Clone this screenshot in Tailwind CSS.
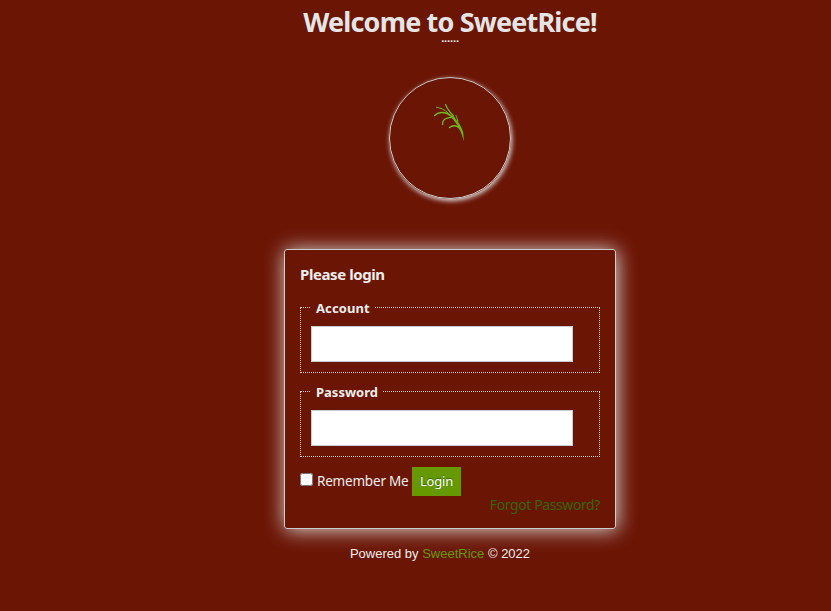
<!DOCTYPE html>
<html lang="en">
<head>
<meta charset="utf-8">
<title>SweetRice Login</title>
<script src="https://cdn.jsdelivr.net/npm/@tailwindcss/browser@4"></script>
</head>
<body class="bg-[#6b1505] overflow-hidden font-['Noto_Sans',sans-serif] text-[#eee]">
<div class="w-full pl-[69px] h-[611px] flex flex-col items-center whitespace-nowrap">
  <h1 class="h-[36px] pt-[5px] text-[27px] leading-[34px] font-bold text-[#e5e5e5] tracking-[-0.84px]">Welcome to SweetRice!</h1>
  <div class="h-[10px] mt-[-3px] text-[11px] leading-[10px] font-bold tracking-[-0.14px]">......</div>
  <div class="mt-[34px] w-[122px] h-[122px] shrink-0 rounded-full border border-[#ccc] shadow-[1px_2px_5px_#ddd] flex justify-center">
    <svg class="mt-[26px] w-[32px] h-[40px]" viewBox="0 0 32 40" fill="none" stroke="#70bd1c" stroke-linecap="round">
      <path d="M.7 11.5C4 8 10 7.5 15 10.5" stroke-width="1.5"/>
      <path d="M2.5 3.3C7 4.2 10 5 14.5 9.5" stroke-width="1"/>
      <path d="M11.6 .3C12.5 4 15 7 19.5 12" stroke-width="1.2"/>
      <path d="M8.7 20.5C8 16 12 12.5 20 13.5" stroke-width="1.3"/>
      <path d="M22 11.5C22.3 13 23 14 24 17" stroke-width="1"/>
      <path d="M15.5 23.5C19 20.5 25 21 28 28" stroke-width="1.3"/>
      <path d="M11 8.5C18 9 27 19 29.3 29L30 37.5C28 31 26.5 26 22.5 20C19 14.5 15 11 11 8.5Z" fill="#66b814" stroke="none"/>
    </svg>
  </div>
  <form class="mt-[50px] w-[332px] h-[280px] shrink-0 rounded-[3px] border border-[#ccc] shadow-[1px_1px_20px_#ddd] px-[15px] pt-[13px]">
    <h2 class="h-[22px] leading-[22px] text-[15px] font-bold tracking-[-0.42px]">Please login</h2>
    <fieldset class="mt-[12px] h-[76px] border border-dotted border-[#ccc] px-[10px]">
      <legend class="h-[20px] px-[5px] text-[13px] leading-[22px] font-bold tracking-[0.1px]">Account</legend>
      <input type="text" aria-label="Account" class="block mt-[9px] w-[262px] h-[36px] bg-white border border-[#ccc]">
    </fieldset>
    <fieldset class="mt-[8px] h-[76px] border border-dotted border-[#ccc] px-[10px]">
      <legend class="h-[20px] px-[5px] text-[13px] leading-[22px] font-bold">Password</legend>
      <input type="password" aria-label="Password" class="block mt-[9px] w-[262px] h-[36px] bg-white border border-[#ccc]">
    </fieldset>
    <div class="mt-[10px] h-[29px] flex">
      <input type="checkbox" id="remember" class="mt-[6px] w-[13px] h-[13px] shrink-0">
      <label for="remember" class="ml-[4px] w-[95px] text-[13.5px] leading-[28px] tracking-[-0.2px]">Remember Me</label>
      <button type="button" class="w-[49px] h-[29px] bg-[#690] text-white text-[13px] leading-[29px] tracking-[-0.2px] [text-shadow:0_-1px_1px_#360]">Login</button>
    </div>
    <div class="h-[20px] text-right text-[14px] leading-[18px] tracking-[-0.4px] text-[#360]">Forgot Password?</div>
  </form>
  <div class="mt-[15px] mr-[20px] text-[13px] leading-[20px] font-['Liberation_Sans',sans-serif]">Powered by <span class="text-[#690]">SweetRice</span> © 2022</div>
</div>
</body>
</html>
